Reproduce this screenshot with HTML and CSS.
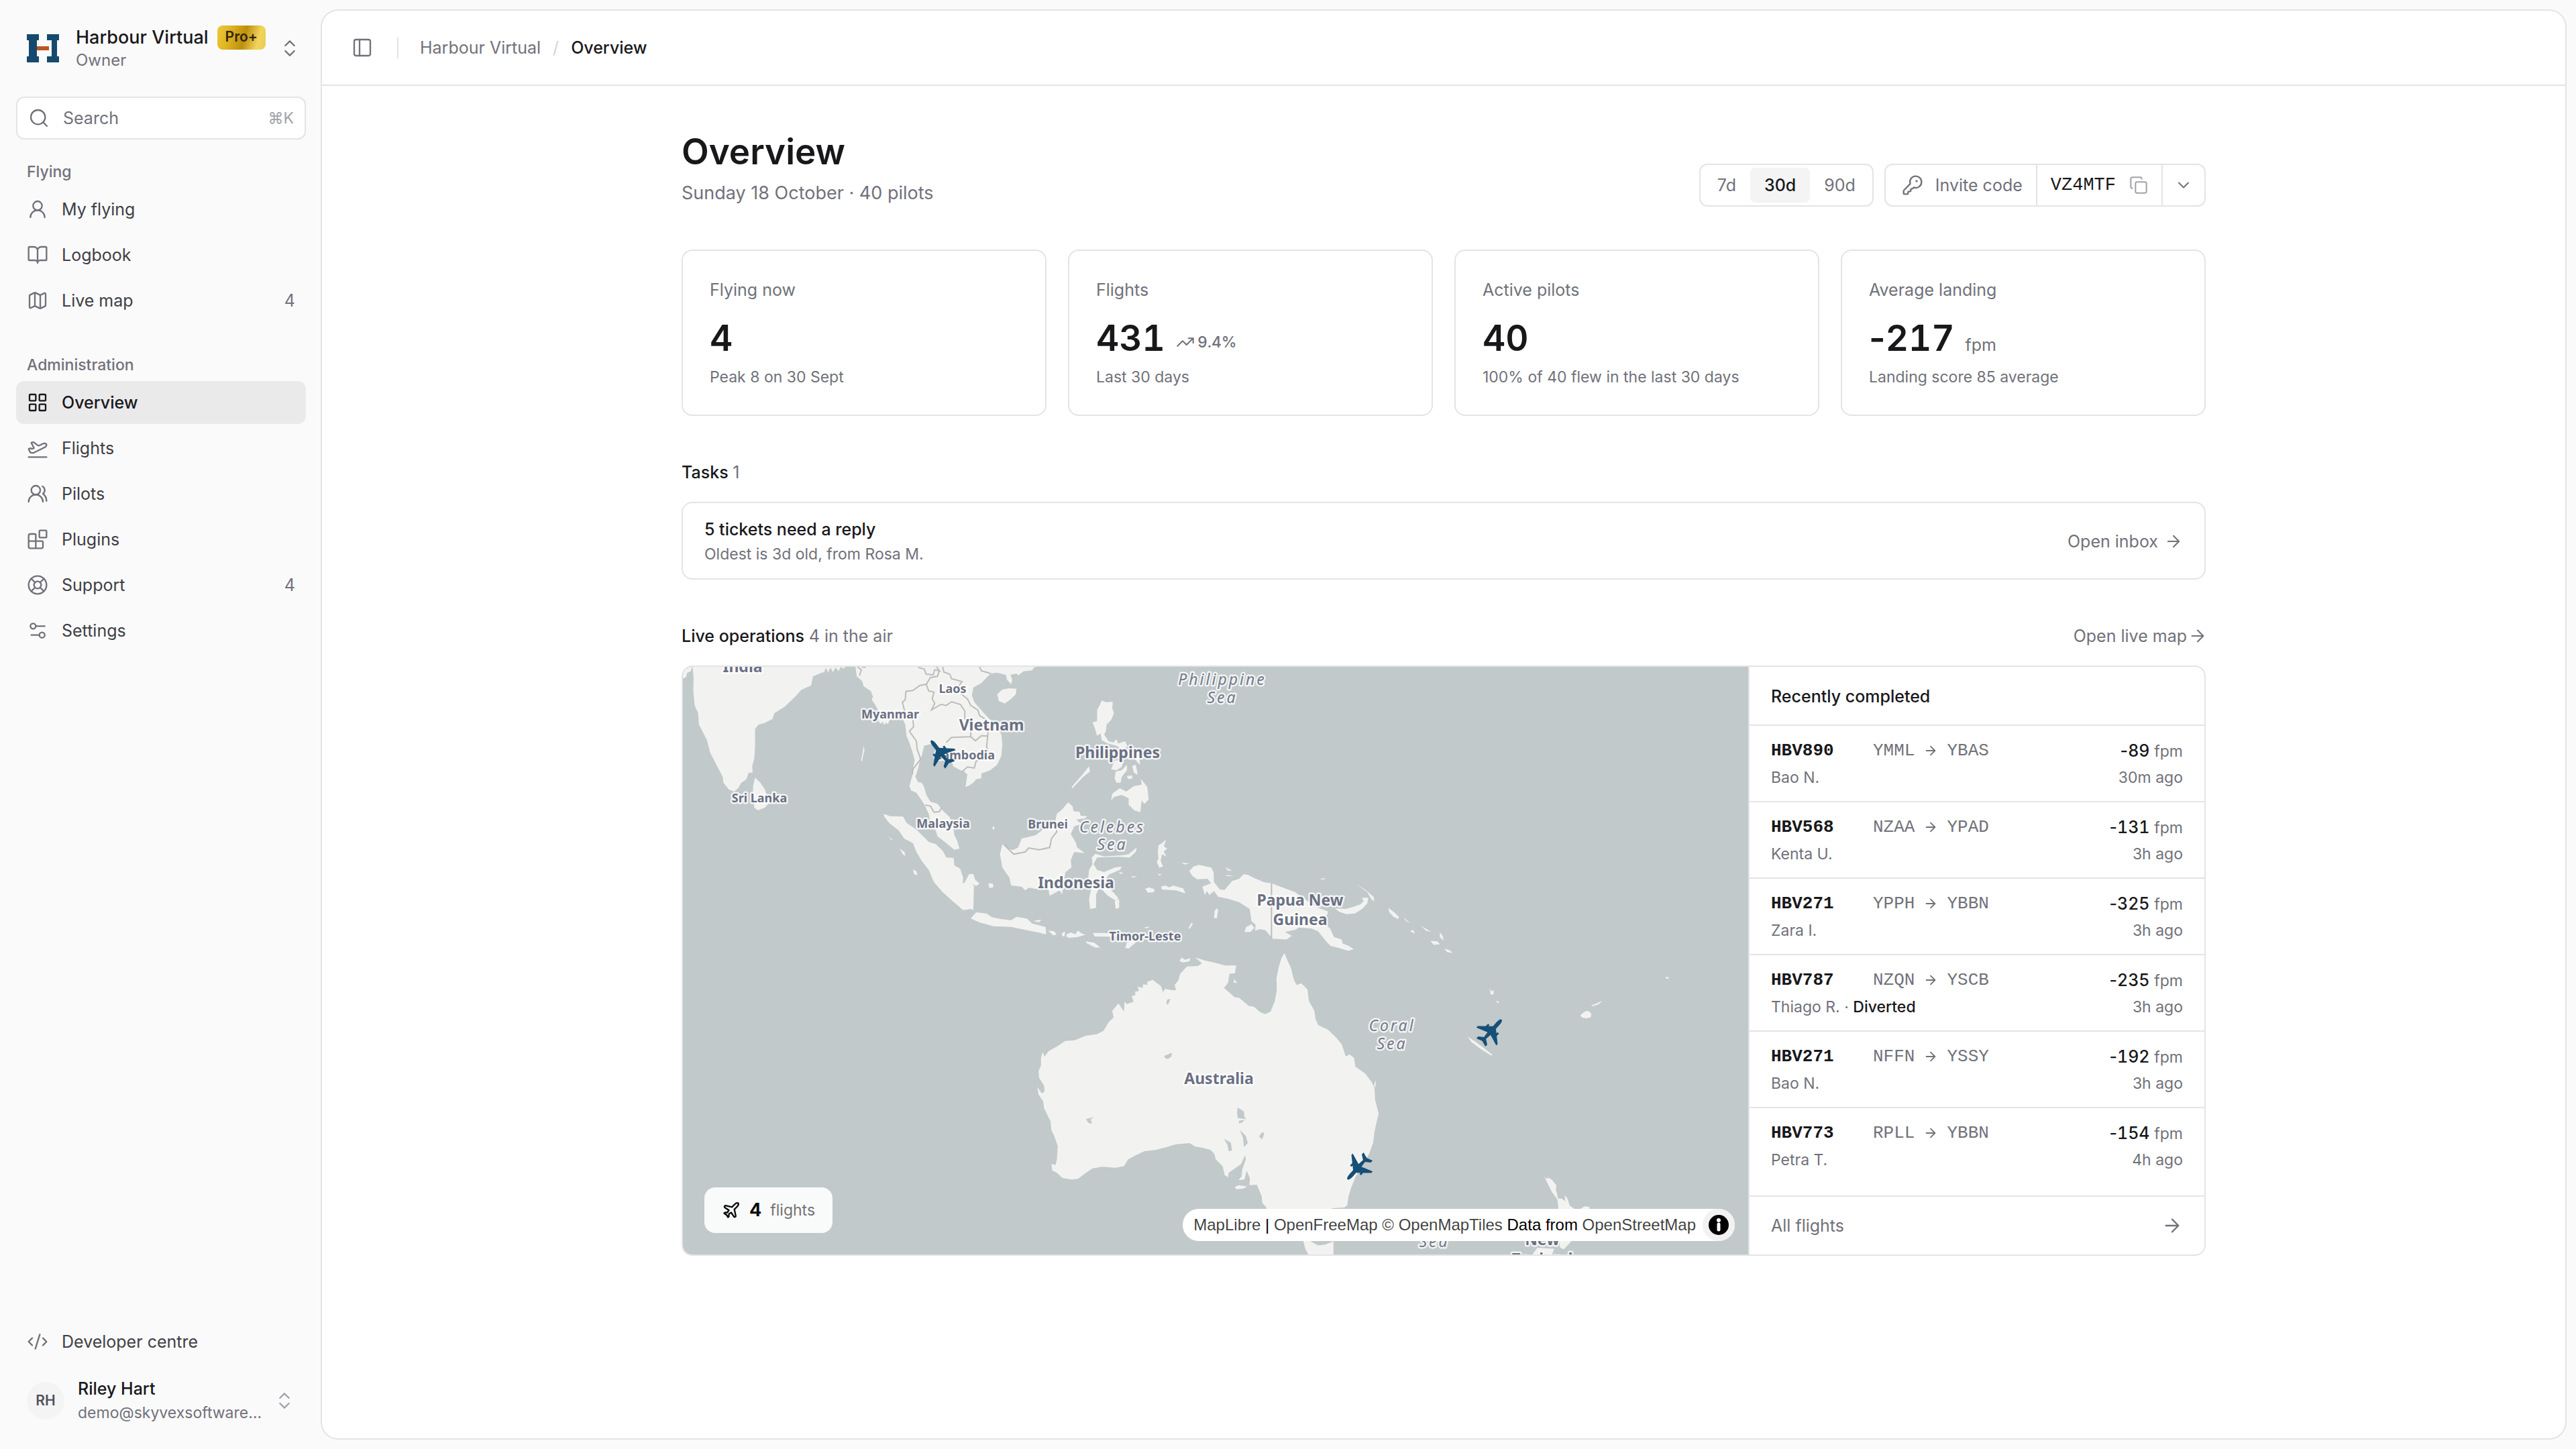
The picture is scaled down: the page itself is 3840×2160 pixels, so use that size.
FILE: index.html
```html
<!DOCTYPE html>
<html lang="en">
<head>
<meta charset="utf-8">
<meta name="viewport" content="width=device-width, initial-scale=1">
<title>Overview · Harbour Virtual</title>
<link rel="stylesheet" href="styles.css">
</head>
<body>
<svg class="sprite" aria-hidden="true">
  <symbol id="i-updown" viewBox="0 0 24 24"><path d="m7 15 5 5 5-5M7 9l5-5 5 5"/></symbol>
  <symbol id="i-search" viewBox="0 0 24 24"><circle cx="11" cy="11" r="8"/><path d="m21 21-4.34-4.34"/></symbol>
  <symbol id="i-user" viewBox="0 0 24 24"><circle cx="12" cy="8" r="5"/><path d="M20 21a8 8 0 0 0-16 0"/></symbol>
  <symbol id="i-book" viewBox="0 0 24 24"><path d="M12 7v14M3 18a1 1 0 0 1-1-1V4a1 1 0 0 1 1-1h5a4 4 0 0 1 4 4 4 4 0 0 1 4-4h5a1 1 0 0 1 1 1v13a1 1 0 0 1-1 1h-6a3 3 0 0 0-3 3 3 3 0 0 0-3-3z"/></symbol>
  <symbol id="i-map" viewBox="0 0 24 24"><path d="M14.106 5.553a2 2 0 0 0 1.788 0l3.659-1.83A1 1 0 0 1 21 4.619v12.764a1 1 0 0 1-.553.894l-4.553 2.277a2 2 0 0 1-1.788 0l-4.212-2.106a2 2 0 0 0-1.788 0l-3.659 1.83A1 1 0 0 1 3 19.381V6.618a1 1 0 0 1 .553-.894l4.553-2.277a2 2 0 0 1 1.788 0zM15 5.764v15M9 3.236v15"/></symbol>
  <symbol id="i-grid" viewBox="0 0 24 24"><rect x="3" y="3" width="7" height="7" rx="1"/><rect x="14" y="3" width="7" height="7" rx="1"/><rect x="14" y="14" width="7" height="7" rx="1"/><rect x="3" y="14" width="7" height="7" rx="1"/></symbol>
  <symbol id="i-takeoff" viewBox="0 0 24 24"><path d="M2 22h20M6.36 17.4 4 17l-2-4 1.1-.55a2 2 0 0 1 1.8 0l.17.1a2 2 0 0 0 1.8 0L8 12 5 6l.9-.45a2 2 0 0 1 2.09.2l4.02 3a2 2 0 0 0 2.1.2l4.19-2.06a2.41 2.41 0 0 1 1.73-.17L21 7a1.4 1.4 0 0 1 .87 1.99l-.38.76c-.23.46-.6.84-1.07 1.08L7.58 17.2a2 2 0 0 1-1.22.18Z"/></symbol>
  <symbol id="i-users" viewBox="0 0 24 24"><path d="M18 21a8 8 0 0 0-16 0"/><circle cx="10" cy="8" r="5"/><path d="M22 20c0-3.37-2-6.5-4-8a5 5 0 0 0-.45-8.3"/></symbol>
  <symbol id="i-blocks" viewBox="0 0 24 24"><path d="M10 22V7a1 1 0 0 0-1-1H4a2 2 0 0 0-2 2v12a2 2 0 0 0 2 2h12a2 2 0 0 0 2-2v-5a1 1 0 0 0-1-1H2"/><rect x="14" y="2" width="8" height="8" rx="1"/></symbol>
  <symbol id="i-buoy" viewBox="0 0 24 24"><circle cx="12" cy="12" r="10"/><circle cx="12" cy="12" r="4"/><path d="m4.93 4.93 4.24 4.24M14.83 9.17l4.24-4.24M14.83 14.83l4.24 4.24M9.17 14.83l-4.24 4.24"/></symbol>
  <symbol id="i-sliders" viewBox="0 0 24 24"><path d="M20 7h-9M14 17H5"/><circle cx="17" cy="17" r="3"/><circle cx="7" cy="7" r="3"/></symbol>
  <symbol id="i-code" viewBox="0 0 24 24"><path d="m18 16 4-4-4-4M6 8l-4 4 4 4M14.5 4l-5 16"/></symbol>
  <symbol id="i-panel" viewBox="0 0 24 24"><rect x="3" y="3" width="18" height="18" rx="2"/><path d="M9 3v18"/></symbol>
  <symbol id="i-key" viewBox="0 0 24 24"><path d="M2.586 17.414A2 2 0 0 0 2 18.828V21a1 1 0 0 0 1 1h3a1 1 0 0 0 1-1v-1a1 1 0 0 1 1-1h1a1 1 0 0 0 1-1v-1a1 1 0 0 1 1-1h.172a2 2 0 0 0 1.414-.586l.814-.814a6.5 6.5 0 1 0-4-4z"/><circle cx="16.5" cy="7.5" r=".5"/></symbol>
  <symbol id="i-copy" viewBox="0 0 24 24"><rect x="8" y="8" width="14" height="14" rx="2"/><path d="M4 16c-1.1 0-2-.9-2-2V4c0-1.1.9-2 2-2h10c1.1 0 2 .9 2 2"/></symbol>
  <symbol id="i-down" viewBox="0 0 24 24"><path d="m6 9 6 6 6-6"/></symbol>
  <symbol id="i-trend" viewBox="0 0 24 24"><path d="M16 7h6v6M22 7l-8.500 8.500-5-5L2 17"/></symbol>
  <symbol id="i-arrow" viewBox="0 0 24 24"><path d="M5 12h14M12 5l7 7-7 7"/></symbol>
  <symbol id="i-arrow-tight" viewBox="2 2 20 20"><path d="M5 12h14M12 5l7 7-7 7"/></symbol>
  <symbol id="i-plane" viewBox="0 0 24 24"><path d="M17.8 19.2 16 11l3.5-3.5C21 6 21.500 4 21 3c-1-.5-3 0-4.500 1.500L13 8 4.800 6.200c-.5-.1-.9.1-1.100.5l-.3.5c-.2.5-.1 1 .3 1.300L9 12l-2 3H4l-1 1 3 2 2 3 1-1v-3l3-2 3.500 5.300c.3.4.8.5 1.300.3l.5-.2c.4-.3.6-.7.5-1.200z"/></symbol>
</svg>

<div class="app">
  <aside class="sidebar">
    <button class="team" type="button">
      <svg class="logo" viewBox="0 0 48 42" aria-hidden="true"><path fill="#154a6e" d="M0 0h18v9h-3v24h3v9H0v-9h3V9H0zM30 0h18v9h-3v24h3v9H30v-9h7V9h-7z"/><path fill="#bc5522" d="M15 18h18v6H15z"/></svg>
      <span class="team-text">
        <span class="team-name">Harbour Virtual <span class="pro">Pro+</span></span>
        <span class="team-role">Owner</span>
      </span>
      <svg class="icon"><use href="#i-updown"/></svg>
    </button>

    <label class="search">
      <svg class="icon"><use href="#i-search"/></svg>
      <input type="search" placeholder="Search" aria-label="Search">
      <kbd>⌘K</kbd>
    </label>

    <nav class="group" aria-label="Flying">
      <h2>Flying</h2>
      <a href="#my-flying"><svg class="icon"><use href="#i-user"/></svg>My flying</a>
      <a href="#logbook"><svg class="icon"><use href="#i-book"/></svg>Logbook</a>
      <a href="#live-map"><svg class="icon"><use href="#i-map"/></svg>Live map<span class="count">4</span></a>
    </nav>
    <nav class="group group-admin" aria-label="Administration">
      <h2>Administration</h2>
      <a class="active" href="#overview" aria-current="page"><svg class="icon"><use href="#i-grid"/></svg>Overview</a>
      <a href="#flights"><svg class="icon"><use href="#i-takeoff"/></svg>Flights</a>
      <a href="#pilots"><svg class="icon"><use href="#i-users"/></svg>Pilots</a>
      <a href="#plugins"><svg class="icon"><use href="#i-blocks"/></svg>Plugins</a>
      <a href="#support"><svg class="icon"><use href="#i-buoy"/></svg>Support<span class="count">4</span></a>
      <a href="#settings"><svg class="icon"><use href="#i-sliders"/></svg>Settings</a>
    </nav>

    <div class="group sidebar-foot">
      <a href="#developers"><svg class="icon"><use href="#i-code"/></svg>Developer centre</a>
      <button class="account" type="button">
        <span class="avatar">RH</span>
        <span class="account-text">
          <span class="account-name">Riley Hart</span>
          <span class="account-mail">demo@skyvexsoftware.com</span>
        </span>
        <svg class="icon"><use href="#i-updown"/></svg>
      </button>
    </div>
  </aside>

  <main class="main">
    <header class="topbar">
      <button class="toggle" type="button" aria-label="Toggle sidebar"><svg class="icon"><use href="#i-panel"/></svg></button>
      <nav class="crumbs" aria-label="Breadcrumb">
        <a href="#home">Harbour Virtual</a>
        <span class="slash">/</span>
        <span class="here">Overview</span>
      </nav>
    </header>

    <div class="content">
      <div class="page-head">
        <div>
          <h1>Overview</h1>
          <p class="date">Sunday 18 October · 40 pilots</p>
        </div>
        <div class="controls">
          <div class="segments" role="group" aria-label="Period">
            <button type="button">7d</button>
            <button type="button" class="on" aria-pressed="true">30d</button>
            <button type="button">90d</button>
          </div>
          <div class="invite">
            <button type="button" class="invite-label"><svg class="icon"><use href="#i-key"/></svg>Invite code</button>
            <button type="button" class="invite-code">VZ4MTF<svg class="icon icon-s"><use href="#i-copy"/></svg></button>
            <button type="button" class="invite-more" aria-label="More"><svg class="icon icon-s"><use href="#i-down"/></svg></button>
          </div>
        </div>
      </div>

      <section class="stats">
        <article class="card stat">
          <h3>Flying now</h3>
          <p class="value">4</p>
          <p class="note">Peak 8 on 30 Sept</p>
        </article>
        <article class="card stat">
          <h3>Flights</h3>
          <p class="value">431 <span class="trend"><svg class="icon"><use href="#i-trend"/></svg>9.4%</span></p>
          <p class="note">Last 30 days</p>
        </article>
        <article class="card stat">
          <h3>Active pilots</h3>
          <p class="value">40</p>
          <p class="note">100% of 40 flew in the last 30 days</p>
        </article>
        <article class="card stat">
          <h3>Average landing</h3>
          <p class="value"><span><span class="neg">-</span>217</span> <span class="unit">fpm</span></p>
          <p class="note">Landing score 85 average</p>
        </article>
      </section>

      <section class="block">
        <div class="block-head"><h2>Tasks <span>1</span></h2></div>
        <a class="card task" href="#inbox">
          <span>
            <strong>5 tickets need a reply</strong>
            <small>Oldest is 3d old, from Rosa M.</small>
          </span>
          <span class="go">Open inbox<svg class="icon icon-s"><use href="#i-arrow"/></svg></span>
        </a>
      </section>

      <section class="block">
        <div class="block-head">
          <h2>Live operations <span>4 in the air</span></h2>
          <a class="go-map" href="#live-map">Open live map<svg class="icon icon-xs"><use href="#i-arrow-tight"/></svg></a>
        </div>
        <div class="card live">
          <div class="map">
            <svg class="map-art" viewBox="1018 994 1588 876" preserveAspectRatio="xMidYMid slice" role="img" aria-label="Map of live flights">
              <defs>
                <path id="jet" d="M0-23C2-23 3-19 3-15V-7L20 8V11L3 5 2 14 9 19V23L0 20-9 23V19L-2 14-3 5-20 11V8L-3-7V-15C-3-19-2-23 0-23ZM8-5h3v5h-3ZM-11-5h3v5h-3Z"/>
              </defs>
              <g class="land">
                <g transform="translate(1000 980) scale(.523 .3333)">
                  <path d="M34 40H62L56 62 46 70 44 88 34 95Z"/>
                  <path d="M62 40 65 95 64 150 68 215 78 250 80 300 90 330 103 370 112 425 125 465 138 505 148 535 150 560 165 590 180 600 192 585 200 562 215 545 222 515 233 515 232 485 238 450 240 400 240 320 250 300 265 295 290 275 295 250 325 220 355 175 372 145 400 125 405 85 430 68 437 66 442 45 448 68 455 45 462 66 470 44 478 62 484 42 492 50 498 40Z"/>
                  <path d="M240 538 255 560 268 590 275 625 280 650 268 672 248 684 238 672 233 620 235 570Z"/>
                  <path d="M550 393 552 415 548 440 545 466 542 460 546 430Z"/>
                  <path d="M526 40 530 85 545 105 550 130 570 150 576 175 573 190 582 210 590 235 592 285 598 298 604 288 608 302 614 290 618 300 624 280 634 272 644 278 656 265 662 280 668 300 672 350 682 390 690 430 695 460 690 500 688 530 680 575 685 595 700 605 715 640 725 665 735 700 740 735 755 775 760 800 785 830 808 860 823 855 815 815 808 795 805 760 795 715 775 685 760 655 740 645 728 615 722 580 715 560 705 558 697 535 705 495 710 460 715 440 722 395 740 388 760 410 780 440 800 465 805 487 820 500 835 510 845 522 840 580 850 573 862 560 870 545 885 540 885 520 910 505 930 480 942 440 945 390 942 345 930 310 905 270 890 245 865 200 858 170 862 135 885 115 900 90 912 72 930 68 955 78 958 100 970 120 973 100 968 78 985 72 990 80 1005 62 1030 58 1035 45 1050 40Z"/>
                  <path d="M945 143 965 138 985 140 983 165 970 185 952 206 935 195 930 165Z"/>
                  <path d="M607 700 625 710 662 712 672 740 700 770 735 825 755 835 775 865 785 895 806 897 808 930 825 945 833 985 832 1010 850 1000 864 1020 862 1130 855 1125 833 1130 800 1085 775 1050 750 1005 735 950 715 910 700 870 690 830 665 810 650 775 622 740 608 712ZM838 1005 850 970 862 968 868 995 880 1012 870 1022 855 1008ZM905 1012 917 1010 920 1027 908 1032ZM620 800 634 818 628 816ZM652 855 666 870 669 888 661 880ZM690 948 700 956 703 976 693 968Z"/>
                  <path d="M870 1140 900 1145 915 1162 940 1170 970 1175 985 1160 1015 1168 1030 1190 1068 1205 1070 1238 1040 1228 1000 1215 970 1205 920 1202 880 1185 855 1168ZM1032 1178 1057 1173 1049 1184ZM1075 1222 1093 1225 1099 1239 1090 1243ZM1115 1232 1124 1226 1122 1248 1115 1246ZM1128 1238 1140 1230 1153 1238 1160 1222 1172 1235 1182 1240 1160 1250 1138 1254 1128 1250ZM1203 1232 1233 1232 1283 1237 1258 1249 1208 1248ZM1182 1270 1207 1276 1224 1298 1209 1298 1187 1280ZM1295 1300 1300 1275 1325 1262 1340 1250 1325 1275 1305 1302ZM1348 1208 1368 1202 1356 1212ZM1475 1212 1484 1186 1488 1190 1480 1212ZM1548 1165 1550 1135 1555 1122 1560 1130 1556 1168Z"/>
                  <path d="M945 835 960 855 975 862 990 850 1000 810 1040 795 1060 770 1095 740 1100 700 1115 680 1132 648 1145 665 1148 688 1165 690 1168 708 1187 710 1180 720 1155 725 1170 745 1150 755 1140 790 1155 830 1158 850 1180 875 1150 870 1140 905 1142 940 1125 960 1120 1000 1115 1060 1108 1042 1080 1066 1075 1030 1040 1035 1020 1030 1010 1042 1000 1025 970 1020 965 985 945 940 938 880Z"/>
                  <path d="M1210 878 1235 890 1285 885 1305 880 1328 850 1325 870 1308 895 1275 892 1215 895 1205 925 1215 950 1235 960 1265 940 1285 935 1280 950 1250 970 1240 990 1255 1040 1275 1075 1270 1090 1245 1065 1230 1040 1220 1035 1212 1060 1212 1120 1195 1125 1192 1080 1200 1020 1190 985 1192 950 1202 925 1200 895ZM1265 1090 1278 1080 1278 1120 1268 1125ZM1275 960 1288 962 1285 970ZM1312 978 1330 980 1317 985ZM1388 968 1400 970 1392 976ZM1455 918 1478 920 1465 926Z"/>
                  <path d="M1390 840 1400 830 1412 813 1405 845 1415 855 1405 868 1413 892 1400 880 1396 910 1403 935 1392 940 1385 915 1390 900 1388 870ZM1397 1025 1410 1020 1420 1028 1432 1020 1460 1033 1467 1055 1440 1042 1400 1038ZM1352 1035 1362 1028 1378 1036 1377 1050 1360 1052Z"/>
                  <path d="M1478 955 1490 935 1505 928 1540 940 1547 960 1548 1005 1565 1038 1578 1040 1600 1000 1620 990 1632 970 1645 972 1660 985 1690 1005 1712 1010 1745 1030 1780 1050 1800 1075 1845 1120 1872 1135 1872 1150 1855 1165 1865 1190 1880 1215 1890 1250 1912 1262 1915 1280 1932 1290 1947 1305 1930 1312 1905 1300 1880 1290 1865 1265 1845 1225 1825 1212 1790 1208 1780 1218 1750 1228 1770 1245 1755 1262 1715 1258 1695 1220 1680 1215 1665 1222 1667 1195 1655 1180 1650 1125 1620 1095 1590 1080 1560 1070 1548 1045 1535 1062 1528 1045 1522 1062 1515 1025 1540 1010 1530 990 1500 992 1485 975ZM1635 1228 1640 1205 1655 1193 1663 1210 1652 1228Z"/>
                  <path d="M1893 1122 1925 1125 1945 1115 1965 1105 1975 1090 1970 1075 1988 1075 1985 1100 1970 1125 1950 1145 1925 1148 1905 1138ZM1953 1013 1980 1040 2003 1070 2005 1090 1998 1084 1985 1050ZM2045 1120 2060 1138 2075 1160 2073 1170 2060 1160 2048 1140ZM2088 1162 2107 1187 2096 1179ZM2138 1200 2168 1228 2152 1222ZM2192 1230 2200 1245 2203 1267 2192 1252ZM2165 1268 2185 1270 2192 1283 2174 1286ZM2205 1302 2220 1310 2228 1322 2212 1318ZM2107 1225 2115 1218 2122 1236ZM1848 990 1868 988 1860 994ZM1580 938 1600 953 1588 953ZM1582 972 1607 978 1586 978Z"/>
                  <path d="M1228 193 1240 200 1260 198 1258 225 1263 250 1255 280 1242 300 1240 330 1235 345 1248 375 1262 380 1270 365 1275 385 1295 375 1302 400 1285 410 1270 395 1245 385 1228 370 1225 340 1215 350 1208 315 1202 290 1215 285 1215 235 1222 215ZM1255 500 1265 460 1290 465 1285 490 1270 505ZM1310 430 1332 420 1338 480 1330 470 1322 450ZM1268 510 1285 505 1300 480 1300 505 1285 535 1282 560 1270 560 1265 540ZM1300 530 1315 528 1315 542 1303 544ZM1315 485 1325 480 1331 525 1320 515ZM1192 487 1195 510 1175 535 1145 585 1142 580 1170 530Z"/>
                  <path d="M1340 543 1358 580 1362 635 1350 655 1342 640 1338 692 1322 685 1305 660 1305 630 1285 615 1262 625 1255 642 1258 610 1280 585 1298 600 1320 575 1342 570ZM917 755 923 758 921 770 917 768Z"/>
                </g>
                <g transform="translate(1500 1400) scale(.4082 .3333)">
                  <path d="M1016 62 1027 95 1040 130 1050 180 1060 205 1078 198 1100 225 1105 275 1125 320 1130 360 1140 385 1175 405 1205 440 1225 470 1240 525 1253 515 1270 530 1275 570 1310 600 1335 640 1345 670 1347 720 1360 780 1352 820 1345 860 1340 910 1325 960 1300 1010 1275 1065 1260 1110 1250 1150 1245 1190 1235 1200 1190 1203 1170 1225 950 1225 950 1200 935 1180 933 1150 915 1098 888 1100 890 1070 878 1035 870 1075 848 1078 860 1060 862 1030 875 985 872 965 858 1005 835 1025 812 1045 810 1065 798 1055 790 1015 765 985 760 960 745 942 715 932 690 928 670 912 620 917 585 930 545 943 505 948 470 968 445 985 430 1015 400 1022 350 1018 315 1025 285 1050 262 1072 240 1075 205 1068 185 1045 168 1035 165 1005 180 1010 185 985 188 925 175 880 165 855 162 815 150 785 138 755 135 725 118 695 113 660 130 690 140 680 138 655 120 620 118 590 127 565 127 530 133 505 140 525 155 500 185 480 215 455 250 452 290 432 330 425 355 410 375 370 392 350 387 320 410 287 430 325 432 280 440 290 465 280 458 255 472 250 470 235 485 232 480 212 498 218 500 202 515 205 515 190 535 182 565 210 573 238 580 222 605 228 620 228 615 205 628 185 635 155 660 122 700 120 715 108 690 82 725 95 760 105 800 118 840 118 835 152 815 155 810 195 795 218 835 260 850 262 885 298 905 302 925 325 945 335 965 325 980 280 988 230 987 175 995 125 1005 85Z"/>
                  <path d="M633 98 640 82 652 92 672 85 670 98 645 104ZM835 1108 850 1100 880 1106 865 1116 840 1118ZM832 178 843 196 830 194ZM1351 628 1347 665 1342 655Z"/>
                  <path d="M1085 1350 1110 1350 1138 1370 1165 1366 1195 1352 1195 1415 1105 1415 1092 1385Z"/>
                  <path class="water" d="M845 753 868 770 870 795 878 805 845 800 843 775ZM850 812 870 808 862 820 850 824ZM853 853 875 880 882 912 868 930 865 890ZM795 893 820 910 825 945 812 948 808 920ZM923 882 936 862 942 870 934 896ZM577 522 605 508 603 525 590 536 579 530ZM584 285 588 270 600 267 590 294ZM291 805 320 795 308 806 314 826 300 822Z"/>
                </g>
                <g transform="translate(2100 1400) scale(.3333)">
                  <path d="M361 218 369 233 379 227 380 245 367 248ZM383 265 392 276 405 280 398 287ZM263 436 300 460 340 490 374 517 370 521 320 490 280 460ZM767 340 790 322 805 322 816 333 815 348 795 355 775 350ZM816 297 840 287 865 275 850 291 820 301ZM1148 168 1162 170 1162 178 1152 176Z"/>
                  <path d="M593 1047 612 1070 628 1068 642 1078 660 1100 658 1120 668 1160 685 1160 700 1172 697 1145 710 1160 720 1192 740 1205 760 1212 785 1195 808 1197 812 1230 760 1300 720 1360 692 1388 676 1378 670 1210 665 1165 640 1130 620 1090 610 1070ZM550 1415 575 1380 650 1385 640 1415Z"/>
                </g>
              </g>
              <g class="borders" transform="translate(1000 980) scale(.523 .3333)">
                <path d="M532 42 543 55 538 82M545 42 555 45M705 45 722 52 728 75 748 78 752 55 765 60 760 85 740 90 728 120 710 125 690 148 670 152 668 190 660 200 668 250 690 280 692 310 680 330 700 375 702 410 712 455 690 500 688 525"/>
                <path d="M728 120 735 150 750 155 745 185 752 205 743 235 770 210 785 215 800 198 825 210 838 240 838 275 855 300 855 355 800 358 785 380"/>
                <path d="M775 42 778 65 795 75 800 95 830 108 822 125 825 160 845 185 855 215 875 235 880 260 900 280 905 320 903 352 900 400 907 432 870 465 865 495 845 490 830 512M855 355 868 373 885 350 903 352M757 42 768 65M880 42 885 60 912 72"/>
                <path d="M725 660 740 665 750 692 765 690 772 672M950 838 977 880 1010 870 1020 852 1050 860 1080 850 1085 810 1100 780 1095 745M1712 1010V1258"/>
              </g>
              <g class="lbl lbl-s">
                <text x="1420" y="1033">Laos</text><text x="1327" y="1071">Myanmar</text><text x="1438" y="1132">Cambodia</text><text x="1132" y="1196">Sri Lanka</text><text x="1406" y="1234">Malaysia</text><text x="1562" y="1235">Brunei</text><text x="1707" y="1402">Timor-Leste</text>
              </g>
              <g class="lbl lbl-m">
                <text x="1107" y="1002">India</text><text x="1478" y="1089">Vietnam</text><text x="1666" y="1130">Philippines</text><text x="1604" y="1324">Indonesia</text><text x="1938" y="1350">Papua New</text><text x="1938" y="1379">Guinea</text><text x="1817" y="1616">Australia</text><text x="2299" y="1856">New</text><text x="2299" y="1885">Zealand</text>
              </g>
              <g class="lbl lbl-sea">
                <text x="1822" y="1021">Philippine</text><text x="1822" y="1048">Sea</text><text x="1658" y="1241">Celebes</text><text x="1658" y="1267">Sea</text><text x="2075" y="1537">Coral</text><text x="2075" y="1564">Sea</text><text x="2138" y="1859">Sea</text>
              </g>
              <g class="jets">
                <use href="#jet" transform="translate(1402 1122) rotate(-38)"/>
                <use href="#jet" transform="translate(2223 1537) rotate(42)"/>
                <use href="#jet" transform="translate(2024 1741) rotate(222)"/>
              </g>
            </svg>
            <div class="map-count"><svg class="icon icon-s"><use href="#i-plane"/></svg><b>4</b><span>flights</span></div>
            <div class="credit">
              <p><a href="#maplibre">MapLibre</a> | <a href="#openfreemap">OpenFreeMap</a> <a href="#openmaptiles">© OpenMapTiles</a> Data from <a href="#osm">OpenStreetMap</a></p>
              <button type="button" aria-label="Toggle attribution"><svg viewBox="0 0 30 30"><circle cx="15" cy="15" r="15"/><circle cx="15" cy="8" r="3" fill="#fff"/><path d="M15 14v8" stroke="#fff" stroke-width="5" stroke-linecap="round"/></svg></button>
            </div>
          </div>
          <div class="recent">
            <h3>Recently completed</h3>
            <ul>
              <li><b>HBV890</b><span class="route">YMML<svg class="icon"><use href="#i-arrow"/></svg>YBAS</span><span class="rate"><span class="neg">-</span>89 <small>fpm</small></span><span class="who">Bao N.</span><span class="ago">30m ago</span></li>
              <li><b>HBV568</b><span class="route">NZAA<svg class="icon"><use href="#i-arrow"/></svg>YPAD</span><span class="rate"><span class="neg">-</span>131 <small>fpm</small></span><span class="who">Kenta U.</span><span class="ago">3h ago</span></li>
              <li><b>HBV271</b><span class="route">YPPH<svg class="icon"><use href="#i-arrow"/></svg>YBBN</span><span class="rate"><span class="neg">-</span>325 <small>fpm</small></span><span class="who">Zara I.</span><span class="ago">3h ago</span></li>
              <li><b>HBV787</b><span class="route">NZQN<svg class="icon"><use href="#i-arrow"/></svg>YSCB</span><span class="rate"><span class="neg">-</span>235 <small>fpm</small></span><span class="who">Thiago R. · <em>Diverted</em></span><span class="ago">3h ago</span></li>
              <li><b>HBV271</b><span class="route">NFFN<svg class="icon"><use href="#i-arrow"/></svg>YSSY</span><span class="rate"><span class="neg">-</span>192 <small>fpm</small></span><span class="who">Bao N.</span><span class="ago">3h ago</span></li>
              <li><b>HBV773</b><span class="route">RPLL<svg class="icon"><use href="#i-arrow"/></svg>YBBN</span><span class="rate"><span class="neg">-</span>154 <small>fpm</small></span><span class="who">Petra T.</span><span class="ago">4h ago</span></li>
            </ul>
            <a class="all" href="#flights">All flights<svg class="icon"><use href="#i-arrow"/></svg></a>
          </div>
        </div>
      </section>
    </div>
  </main>
</div>
</body>
</html>
```

FILE: styles.css
```css
:root {
  --bg: #fafafa;
  --line: #e4e4e5;
  --ink: #18181b;
  --soft: #3f3f46;
  --muted: #71717a;
  --faint: #a1a1aa;
  --sans: Inter, "Liberation Sans", sans-serif;
  --mono: "Liberation Mono", monospace;
}

* { box-sizing: border-box; }

body {
  margin: 0;
  background: var(--bg);
  color: var(--ink);
  font: 400 25px/40px var(--sans);
}

h1, h2, h3, p, ul { margin: 0; padding: 0; }
ul { list-style: none; }
a { color: inherit; text-decoration: none; }
button {
  margin: 0;
  padding: 0;
  border: 0;
  background: none;
  color: inherit;
  font: inherit;
  text-align: left;
  cursor: pointer;
}

.sprite { position: absolute; width: 0; height: 0; }
.icon {
  flex: none;
  display: block;
  width: 32px;
  height: 32px;
  fill: none;
  stroke: currentColor;
  stroke-width: 1.75;
  stroke-linecap: round;
  stroke-linejoin: round;
}
.icon-s { width: 28px; height: 28px; }
.icon-xs { width: 24px; height: 24px; }

.app {
  display: grid;
  grid-template-columns: 480px minmax(0, 1fr);
  min-height: 100vh;
}

/* Sidebar */
.sidebar {
  display: flex;
  flex-direction: column;
  padding: 24px;
}
.team {
  display: flex;
  align-items: center;
  height: 96px;
  padding: 0 8px 0 16px;
  color: var(--muted);
}
.logo { width: 48px; height: 42px; margin-right: 25px; }
.team-text { flex: 1; display: flex; flex-direction: column; }
.team-name {
  display: flex;
  align-items: center;
  gap: 13px;
  color: var(--ink);
  font-weight: 500;
  font-size: 27px;
  line-height: 36px;
  white-space: nowrap;
}
.team-role { font-size: 24px; line-height: 32px; }
.pro {
  height: 36px;
  padding: 0 12px;
  border-radius: 8px;
  background: linear-gradient(105deg, #edc93f 0%, #e0b521 25%, #bd8f0e 55%, #f2d45c 82%, #e9cc58 100%);
  color: #33260a;
  font-size: 21px;
  font-weight: 600;
  line-height: 34px;
}
.search {
  display: flex;
  align-items: center;
  height: 64px;
  margin: 24px 0;
  padding: 0 16px;
  border: 2px solid var(--line);
  border-radius: 12px;
  background: #fff;
  color: var(--muted);
}
.search input {
  flex: 1;
  min-width: 0;
  margin: 0 0 0 20px;
  padding: 0;
  border: 0;
  outline: 0;
  background: none;
  font: inherit;
  color: var(--ink);
}
.search input::placeholder { color: var(--muted); opacity: 1; }
.search kbd { color: var(--faint); font: 400 23px/40px Inter, "DejaVu Sans", sans-serif; }

.group { display: flex; flex-direction: column; gap: 4px; }
.group-admin { margin-top: 40px; }
.group h2 {
  margin-bottom: -4px;
  padding: 0 16px;
  color: var(--muted);
  font-size: 23px;
  font-weight: 500;
  line-height: 48px;
}
.group a {
  display: flex;
  align-items: center;
  gap: 20px;
  height: 64px;
  padding: 0 16px;
  border-radius: 12px;
  color: var(--soft);
}
.group a .icon { color: var(--muted); }
.group .active { background: #eaeaeb; color: var(--ink); font-weight: 500; }
.group .active .icon { color: var(--ink); }
.count { margin-left: auto; color: var(--muted); }
.sidebar-foot { margin-top: auto; gap: 8px; }
.account {
  display: flex;
  align-items: center;
  height: 96px;
  padding: 0 16px;
  color: var(--muted);
}
.account > .icon { color: var(--faint); }
.avatar {
  width: 56px;
  height: 56px;
  margin-right: 20px;
  border-radius: 50%;
  background: #f4f4f5;
  color: #52525b;
  font-size: 21px;
  font-weight: 600;
  line-height: 56px;
  text-align: center;
}
.account-text { flex: 1; min-width: 0; display: flex; flex-direction: column; margin-right: 12px; }
.account-name { color: var(--ink); font-weight: 500; line-height: 36px; }
.account-mail { overflow: hidden; font-size: 23px; line-height: 36px; text-overflow: ellipsis; white-space: nowrap; }

/* Main panel */
.main {
  margin: 16px 16px 16px 0;
  border-radius: 24px;
  background: #fff;
  box-shadow: 0 0 0 2px var(--line);
}
.topbar {
  display: flex;
  align-items: center;
  height: 112px;
  padding: 0 44px;
  border-bottom: 2px solid var(--line);
}
.toggle { color: var(--muted); padding-right: 36px; }
.crumbs {
  display: flex;
  align-items: center;
  gap: 18px;
  height: 32px;
  padding-left: 32px;
  border-left: 2px solid var(--line);
  color: var(--muted);
}
.slash { color: #d4d4d8; }
.here { color: var(--ink); font-weight: 500; }

.content {
  display: flex;
  flex-direction: column;
  gap: 64px;
  max-width: 2400px;
  margin: 0 auto;
  padding: 64px;
}
.page-head { display: flex; align-items: flex-end; justify-content: space-between; }
h1 { margin-bottom: 8px; font-size: 53px; font-weight: 600; line-height: 68px; }
.date { color: var(--muted); font-size: 27px; }

.controls { display: flex; gap: 16px; color: var(--muted); }
.segments, .invite {
  display: flex;
  height: 64px;
  border: 2px solid var(--line);
  border-radius: 12px;
}
.segments { padding: 4px; }
.segments button { padding: 0 21px; border-radius: 8px; }
.segments .on { background: #f4f4f5; color: var(--ink); font-weight: 500; }
.invite button { display: flex; align-items: center; }
.invite button + button { border-left: 2px solid var(--line); }
.invite .invite-label { gap: 18px; padding: 0 20px 0 24px; }
.invite .invite-code { gap: 20px; padding: 0 20px; color: var(--ink); font-family: var(--mono); font-size: 27px; }
.invite-code .icon { color: var(--faint); }
.invite .invite-more { padding: 0 17px; }

.card { border: 2px solid var(--line); border-radius: 16px; }
.stats { display: grid; grid-template-columns: repeat(4, minmax(0, 1fr)); gap: 32px; }
.stat { padding: 38px 40px; color: var(--muted); }
.stat h3 { font-size: 25px; font-weight: 400; }
.value {
  display: flex;
  align-items: baseline;
  gap: 16px;
  margin: 20px 0 8px;
  color: var(--ink);
  font-size: 53px;
  font-weight: 600;
  line-height: 64px;
  font-variant-numeric: tabular-nums;
}
.neg { font-variant-numeric: normal; }
.unit { color: var(--muted); font-size: 25px; font-weight: 400; line-height: 40px; }
.trend {
  display: flex;
  align-items: center;
  align-self: flex-end;
  gap: 4px;
  margin-bottom: 8px;
  color: var(--muted);
  font-size: 23px;
  font-weight: 500;
  line-height: 36px;
}
.trend .icon { width: 28px; height: 28px; }
.note { font-size: 23px; line-height: 36px; }

.block { display: flex; flex-direction: column; gap: 24px; }
.block-head { display: flex; justify-content: space-between; }
.block-head h2 { font-size: 25px; font-weight: 500; }
.block-head h2 span { color: var(--muted); font-weight: 400; }
.go-map, .go { display: flex; align-items: center; color: var(--muted); }
.go-map { gap: 4px; }
.go { gap: 9px; }
.task {
  display: flex;
  align-items: center;
  justify-content: space-between;
  padding: 20px 32px 18px;
}
.task strong, .task small { display: block; }
.task strong { font-weight: 500; line-height: 38px; }
.task small { color: var(--muted); font-size: 23px; line-height: 36px; }

/* Live operations */
.live {
  display: grid;
  grid-template-columns: minmax(0, 1fr) 680px;
  overflow: hidden;
}
.map { position: relative; background: #c1c9ca; }
.map-art { position: absolute; inset: 0; width: 100%; height: 100%; }
.land { fill: #f2f3f1; }
.land .water { fill: #c1c9ca; }
.borders path { fill: none; stroke: #bcbcbc; stroke-width: 2; vector-effect: non-scaling-stroke; }
.lbl {
  fill: #6b7083;
  stroke: rgba(255, 255, 255, .8);
  stroke-width: 5;
  stroke-linejoin: round;
  paint-order: stroke;
  text-anchor: middle;
  font-family: "Noto Sans", sans-serif;
}
.lbl-s { font-size: 18px; font-weight: 700; }
.lbl-m { font-size: 23px; font-weight: 700; }
.lbl-sea { fill: #74798a; font-size: 23px; font-style: italic; letter-spacing: 3px; }
.jets { fill: #164f77; }

.map-count {
  position: absolute;
  left: 32px;
  bottom: 32px;
  display: flex;
  align-items: center;
  height: 68px;
  padding: 0 26px;
  border-radius: 16px;
  background: rgba(255, 255, 255, .9);
  color: #0a0a0a;
}
.map-count .icon { stroke-width: 2; }
.map-count b { margin: 0 13px; font-size: 27px; font-weight: 700; }
.map-count span { color: #737373; font-size: 23px; }
.credit {
  position: absolute;
  right: 20px;
  bottom: 20px;
  display: flex;
  height: 48px;
  padding-left: 16px;
  border-radius: 24px;
  background: #fff;
  color: #000;
  font: 24px/48px "Liberation Sans", sans-serif;
  white-space: nowrap;
}
.credit a { color: rgba(0, 0, 0, .75); }
.credit button {
  display: grid;
  place-items: center;
  width: 48px;
  height: 48px;
  margin-left: 10px;
  border-radius: 50%;
  background: #f2f2f2;
}
.credit svg { width: 30px; height: 30px; }

.recent { display: flex; flex-direction: column; border-left: 2px solid var(--line); }
.recent h3 {
  padding: 24px 32px 22px;
  border-bottom: 2px solid var(--line);
  font-size: 25px;
  font-weight: 500;
}
.recent li {
  display: grid;
  grid-template-columns: 152px 1fr auto;
  grid-template-rows: 40px 40px;
  padding: 17px 32px 15px;
  color: var(--muted);
}
.recent li + li { border-top: 2px solid var(--line); }
.recent li:last-child { padding-bottom: 33px; }
.recent b { color: var(--ink); font: 700 26px/40px var(--mono); }
.route { display: flex; align-items: center; gap: 13px; font: 400 26px/40px var(--mono); }
.route .icon { width: 22px; height: 22px; stroke-width: 2; }
.rate { color: var(--ink); font-weight: 500; text-align: right; font-variant-numeric: tabular-nums; }
.rate small { color: var(--muted); font-size: 23px; font-weight: 400; line-height: 24px; }
.who { grid-column: 1 / 3; font-size: 23px; }
.who em { color: var(--ink); font-style: normal; font-weight: 500; }
.ago { font-size: 23px; text-align: right; }
.all {
  display: flex;
  align-items: center;
  justify-content: space-between;
  margin-top: auto;
  padding: 23px 32px;
  border-top: 2px solid var(--line);
  color: var(--muted);
}
```
